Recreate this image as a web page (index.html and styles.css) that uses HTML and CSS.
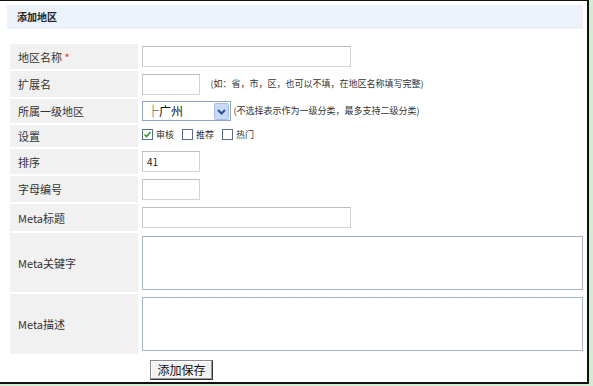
FILE: index.html
```html
<!DOCTYPE html>
<html lang="zh">

<head>
    <meta charset="UTF-8">
    <title>添加地区</title>
    <link rel="stylesheet" href="styles.css">
</head>

<body>
    <div class="frame">
        <div class="header">添加地区</div>

        <table class="form-table">
            <tr class="row-1">
                <td class="label">地区名称 <span class="star">*</span></td>
                <td class="value"><span class="input wide"></span></td>
            </tr>
            <tr class="row-2">
                <td class="label">扩展名</td>
                <td class="value">
                    <span class="input short"></span>
                    <span class="hint hint-gap">(如：省，市，区，也可以不填，在地区名称填写完整)</span>
                </td>
            </tr>
            <tr class="row-3">
                <td class="label">所属一级地区</td>
                <td class="value">
                    <span class="select">
                        <span class="select-text">├广州</span>
                        <span class="select-arrow">
                            <svg width="15" height="17" viewBox="0 0 15 17">
                                <rect x="0.5" y="0.5" width="14" height="16" rx="1" fill="#c8d8f6" stroke="#a7bde8" />
                                <path d="M4 7 L7.5 10.5 L11 7" fill="none" stroke="#2a4d9b" stroke-width="2" />
                            </svg>
                        </span>
                    </span>
                    <span class="hint">(不选择表示作为一级分类，最多支持二级分类)</span>
                </td>
            </tr>
            <tr class="row-4">
                <td class="label">设置</td>
                <td class="value checks">
                    <span class="check">
                        <svg width="11" height="11" viewBox="0 0 11 11">
                            <rect x="0.5" y="0.5" width="10" height="10" fill="#fff" stroke="#5a6f8a" />
                            <path d="M2.5 5.5 L4.5 7.5 L8.5 3" fill="none" stroke="#2f9a2f" stroke-width="1.6" />
                        </svg>
                        审核
                    </span>
                    <span class="check">
                        <svg width="11" height="11" viewBox="0 0 11 11">
                            <rect x="0.5" y="0.5" width="10" height="10" fill="#fff" stroke="#5a6f8a" />
                        </svg>
                        推荐
                    </span>
                    <span class="check">
                        <svg width="11" height="11" viewBox="0 0 11 11">
                            <rect x="0.5" y="0.5" width="10" height="10" fill="#fff" stroke="#5a6f8a" />
                        </svg>
                        热门
                    </span>
                </td>
            </tr>
            <tr class="row-5">
                <td class="label">排序</td>
                <td class="value"><span class="input short">41</span></td>
            </tr>
            <tr class="row-6">
                <td class="label">字母编号</td>
                <td class="value"><span class="input short"></span></td>
            </tr>
            <tr class="row-7">
                <td class="label">Meta标题</td>
                <td class="value"><span class="input wide"></span></td>
            </tr>
            <tr class="row-8">
                <td class="label">Meta关键字</td>
                <td class="value"><span class="textarea"></span></td>
            </tr>
            <tr class="row-9">
                <td class="label">Meta描述</td>
                <td class="value"><span class="textarea"></span></td>
            </tr>
        </table>

        <div class="actions">
            <span class="button">添加保存</span>
        </div>
    </div>
</body>

</html>
```

FILE: styles.css
```css
body {
    margin: 0;
    background: #d3ebd3;
    font-family: "Noto Sans CJK SC", "Liberation Sans", sans-serif;
    color: #333;
}

.frame {
    box-sizing: border-box;
    width: 589px;
    height: 384px;
    overflow: hidden;
    background: #fff;
    border-top: 1px solid #111;
    border-right: 2px solid #111;
    border-bottom: 2px solid #111;
}

.header {
    margin: 4px 4px 0 7px;
    height: 24px;
    line-height: 24px;
    padding-left: 10px;
    background: #edf2fa;
    font-size: 10px;
    font-weight: bold;
    color: #222;
}

.form-table {
    margin: 13px 0 0 10px;
    width: 575px;
    border-collapse: separate;
    border-spacing: 0 2px;
}

.form-table td {
    padding: 0;
    font-size: 11px;
    line-height: 14px;
}

.label {
    width: 120px;
    padding-left: 8px !important;
    background: #f1f1f1;
    color: #333;
}

.value {
    padding-left: 4px !important;
    vertical-align: middle;
}

.row-1 td { height: 25px; }
.row-2 td { height: 26px; }
.row-3 td { height: 24px; }
.row-4 td { height: 22px; }
.row-5 td { height: 25px; }
.row-6 td { height: 26px; }
.row-7 td { height: 27px; }
.row-8 td { height: 59px; }
.row-9 td { height: 60px; }

.star {
    color: #d33;
}

.input {
    display: inline-block;
    vertical-align: middle;
    box-sizing: border-box;
    height: 21px;
    line-height: 19px;
    padding-left: 4px;
    border: 1px solid #d4d4d4;
    border-top-color: #bdbdbd;
    border-left-color: #c6c6c6;
    font-size: 10px;
    color: #222;
}

.wide {
    width: 209px;
}

.short {
    width: 58px;
}

.hint {
    font-size: 9px;
    color: #333;
    vertical-align: middle;
}

.hint-gap {
    margin-left: 8px;
}

.select {
    display: inline-flex;
    align-items: center;
    vertical-align: middle;
    box-sizing: border-box;
    width: 89px;
    height: 20px;
    border: 1px solid #8ea4c4;
    padding-left: 4px;
}

.select-text {
    flex: 1;
    font-size: 12px;
    color: #111;
}

.select-arrow {
    display: flex;
    margin-right: 1px;
}

.checks {
    font-size: 9px !important;
}

.check {
    display: inline-flex;
    align-items: center;
    gap: 3px;
    margin-right: 6px;
}

.check svg {
    display: block;
}

.textarea {
    display: block;
    box-sizing: border-box;
    width: 441px;
    height: 54px;
    border: 1px solid #aab8c6;
    border-top-color: #9fb0c0;
}

.actions {
    display: flex;
    padding: 4px 0 0 150px;
}

.button {
    display: block;
    box-sizing: border-box;
    width: 63px;
    height: 20px;
    line-height: 17px;
    text-align: center;
    font-size: 12px;
    color: #111;
    background: #f2f2f2;
    border: 1px solid #333;
    border-top-color: #888;
    border-left-color: #888;
    box-shadow: inset -1px -1px 0 #999, inset 1px 1px 0 #fff;
}
```
